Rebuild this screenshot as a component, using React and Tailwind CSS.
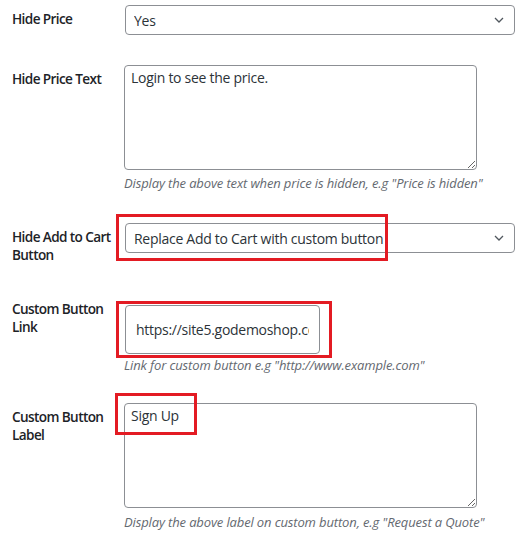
import React from "react";

const font = { fontFamily: '"Open Sans", "Noto Sans", sans-serif' };

function Chevron() {
  return (
    <svg
      className="pointer-events-none absolute right-[8px] top-1/2 -translate-y-1/2"
      width="16"
      height="16"
      viewBox="0 0 20 20"
    >
      <path d="M5 7.5l5 5 5-5" fill="none" stroke="#50575e" strokeWidth="1.6" />
    </svg>
  );
}

function Label({ children, className = "" }) {
  return (
    <div className={"w-[104px] shrink-0 whitespace-nowrap text-[13.6px] leading-[18px] font-semibold text-[#1d2327] tracking-[-0.045em] " + className}>
      {children}
    </div>
  );
}

function Desc({ children, className = "" }) {
  return (
    <p className={"whitespace-nowrap text-[13px] leading-[18px] italic text-[#646970] tracking-[-0.01em] " + className}>{children}</p>
  );
}

export default function App() {
  return (
    <div className="relative w-[531px] h-[549px] bg-white overflow-hidden" style={font}>
      <div className="flex flex-col pl-[12px]">
        {/* Row 1 */}
        <div className="flex items-start gap-[9px] pt-[5px]">
          <Label className="mt-[5px]">Hide Price</Label>
          <div className="relative w-[390px]">
            <select
              defaultValue="yes"
              className="appearance-none w-full h-[30px] border border-[#8c8f94] rounded-[4px] bg-white pl-[8px] pr-[24px] text-[14px] text-[#2c3338] tracking-[-0.02em] outline-none"
            >
              <option value="yes">Yes</option>
              <option value="no">No</option>
            </select>
            <Chevron />
          </div>
        </div>

        {/* Row 2 */}
        <div className="flex items-start gap-[8px] mt-[30px]">
          <Label className="mt-[5px]">Hide Price Text</Label>
          <div className="flex flex-col">
            <textarea
              readOnly
              defaultValue="Login to see the price."
              className="block w-[353px] h-[105px] border border-[#8c8f94] rounded-[4px] px-[6px] py-[2px] text-[14px] leading-[20px] text-[#2c3338] tracking-[-0.02em] outline-none resize"
            />
            <Desc className="mt-[4px]">Display the above text when price is hidden, e.g "Price is hidden"</Desc>
          </div>
        </div>

        {/* Row 3 */}
        <div className="flex items-start gap-[9px] mt-[31px]">
          <Label className="mt-[5px]">
            Hide Add to Cart
            <br />
            Button
          </Label>
          <div className="relative w-[390px]">
            <select
              defaultValue="replace"
              className="appearance-none w-full h-[30px] border border-[#8c8f94] rounded-[4px] bg-white pl-[8px] pr-[24px] text-[14px] text-[#2c3338] tracking-[-0.02em] outline-none"
            >
              <option value="replace">Replace Add to Cart with custom button</option>
            </select>
            <Chevron />
          </div>
        </div>

        {/* Row 4 */}
        <div className="flex items-start gap-[9px] mt-[36px]">
          <Label>
            Custom Button
            <br />
            Link
          </Label>
          <div className="flex flex-col mt-[5px]">
            <input
              readOnly
              value="https://site5.godemoshop.com/my-account"
              className="block w-[195px] h-[49px] border border-[#8c8f94] rounded-[4px] bg-white px-[10px] text-[14px] text-[#2c3338] tracking-[-0.02em] outline-none"
            />
            <Desc className="mt-[2px] -ml-[1px]">Link for custom button e.g "http://www.example.com"</Desc>
          </div>
        </div>

        {/* Row 5 */}
        <div className="flex items-start gap-[8px] mt-[29px]">
          <Label className="mt-[5px]">
            Custom Button
            <br />
            Label
          </Label>
          <div className="flex flex-col">
            <textarea
              readOnly
              defaultValue="Sign Up"
              className="block w-[353px] h-[105px] border border-[#8c8f94] rounded-[4px] px-[6px] py-[2px] text-[14px] leading-[20px] text-[#2c3338] tracking-[-0.02em] outline-none resize"
            />
            <Desc className="mt-[5px]">Display the above label on custom button, e.g "Request a Quote"</Desc>
          </div>
        </div>
      </div>

      {/* Annotation boxes */}
      <div className="pointer-events-none absolute left-[116px] top-[214px] w-[272px] h-[47px] border-[3px] border-[#e31b23]" />
      <div className="pointer-events-none absolute left-[116px] top-[301px] w-[216px] h-[57px] border-[3px] border-[#e31b23]" />
      <div className="pointer-events-none absolute left-[115px] top-[393px] w-[82px] h-[42px] border-[3px] border-[#e31b23]" />
    </div>
  );
}
